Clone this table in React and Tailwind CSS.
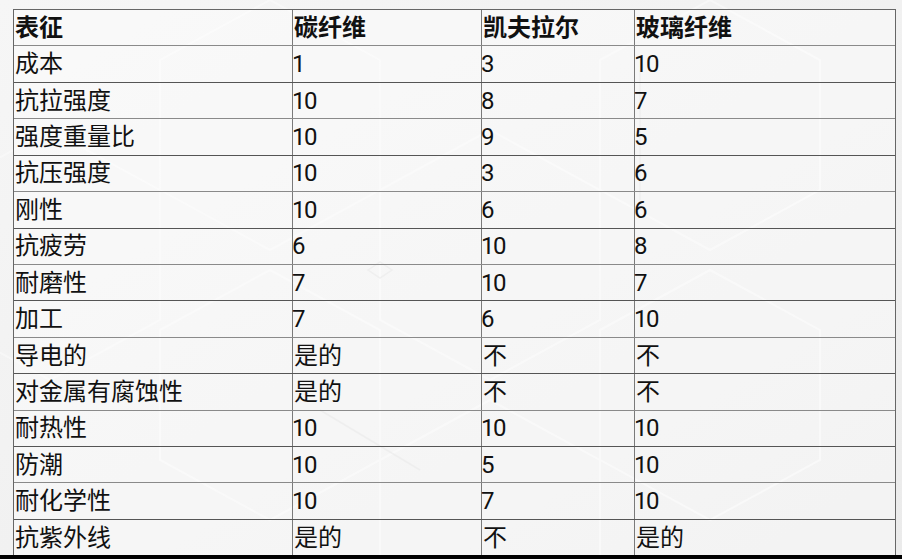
import React from 'react';

const rows = [
  ['成本', '1', '3', '10'],
  ['抗拉强度', '10', '8', '7'],
  ['强度重量比', '10', '9', '5'],
  ['抗压强度', '10', '3', '6'],
  ['刚性', '10', '6', '6'],
  ['抗疲劳', '6', '10', '8'],
  ['耐磨性', '7', '10', '7'],
  ['加工', '7', '6', '10'],
  ['导电的', '是的', '不', '不'],
  ['对金属有腐蚀性', '是的', '不', '不'],
  ['耐热性', '10', '10', '10'],
  ['防潮', '10', '5', '10'],
  ['耐化学性', '10', '7', '10'],
  ['抗紫外线', '是的', '不', '是的'],
];

function Row({ cells, header, dark }) {
  return (
    <div
      className={`grid grid-cols-[279px_189px_153px_262px] h-[36.43px] border-b ${
        dark ? 'border-[#555]' : 'border-[#8a8a8a]'
      }`}
    >
      {cells.map((c, i) => (
        <div
          key={i}
          className={`flex items-center leading-none ${
            i < 3 ? 'border-r border-[#7a7a7a]' : ''
          } ${header ? 'font-bold' : ''} ${/^\d+$/.test(c) ? 'tracking-[-1.5px] -ml-px' : 'pl-px'}`}
        >
          {c}
        </div>
      ))}
    </div>
  );
}

export default function App() {
  return (
    <div className="relative w-[902px] h-[559px] overflow-hidden bg-[#f1f1f1] text-[24px] text-[#111] font-['Roboto','Noto_Sans_CJK_SC',sans-serif]">
      {/* faint hexagon backdrop */}
      <svg className="absolute inset-0" width="902" height="559" viewBox="0 0 902 559">
        <defs>
          <linearGradient id="g" x1="0" y1="0" x2="1" y2="1">
            <stop offset="0" stopColor="#f6f6f6" />
            <stop offset="0.5" stopColor="#f1f1f1" />
            <stop offset="1" stopColor="#ebebeb" />
          </linearGradient>
        </defs>
        <rect width="902" height="559" fill="url(#g)" />
        <g fill="none" stroke="#fbfbfb" strokeWidth="2" opacity="0.6">
          <polygon points="160,60 270,0 380,60 380,190 270,250 160,190" />
          <polygon points="380,190 490,130 600,190 600,320 490,380 380,320" />
          <polygon points="600,60 710,0 820,60 820,190 710,250 600,190" />
          <polygon points="160,330 270,270 380,330 380,460 270,520 160,460" />
          <polygon points="600,330 710,270 820,330 820,460 710,520 600,460" />
          <polygon points="-60,190 50,130 160,190 160,320 50,380 -60,320" />
          <polygon points="380,460 490,400 600,460 600,590 490,650 380,590" />
        </g>
        <g fill="none" stroke="#dcdcdc" strokeWidth="1.5" opacity="0.6">
          <polygon points="368,270 380,262 392,270 380,278" />
          <line x1="320" y1="410" x2="420" y2="470" />
          <line x1="640" y1="70" x2="640" y2="200" />
        </g>
      </svg>

      <div className="relative pt-[9px] pl-[13px] flex flex-col h-full">
        <div className="w-[883px] border-t border-l border-r border-[#666] bg-white/40">
          <Row cells={['表征', '碳纤维', '凯夫拉尔', '玻璃纤维']} header />
          {rows.map((r, i) => (
            <Row key={i} cells={r} dark={i % 2 === 0} />
          ))}
        </div>
      </div>
      <div className="absolute left-0 right-0 bottom-0 h-[4px] bg-black" />
    </div>
  );
}
